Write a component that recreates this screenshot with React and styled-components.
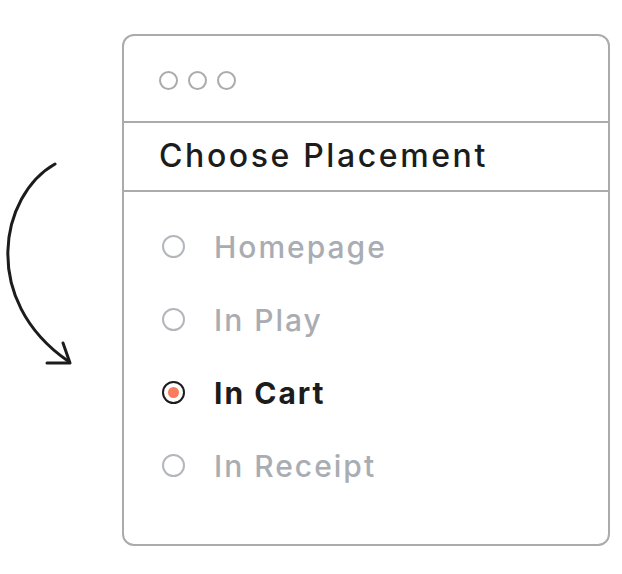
import React from "react";
import styled, { createGlobalStyle } from "styled-components";

const Global = createGlobalStyle`
  html, body { margin: 0; padding: 0; background: #ffffff; }
  body { font-family: "Inter", "Lato", sans-serif; }
`;

const Page = styled.div`
  display: flex;
  align-items: flex-start;
  width: 622px;
  height: 574px;
  background: #fff;
`;

const ArrowCol = styled.div`
  width: 122px;
  flex: none;
`;

const Card = styled.div`
  margin-top: 34px;
  width: 488px;
  height: 512px;
  box-sizing: border-box;
  border: 2px solid #ababab;
  border-radius: 12px;
  display: flex;
  flex-direction: column;
`;

const Header = styled.div`
  height: 87px;
  box-sizing: border-box;
  display: flex;
  align-items: center;
  gap: 10px;
  padding: 4px 0 0 35px;
  border-bottom: 2px solid #ababab;
`;

const Dot = styled.span`
  width: 19px;
  height: 19px;
  box-sizing: border-box;
  border: 2px solid #ababab;
  border-radius: 50%;
`;

const TitleRow = styled.div`
  height: 69px;
  box-sizing: border-box;
  display: flex;
  align-items: center;
  padding: 0 0 2px 35px;
  border-bottom: 2px solid #ababab;
`;

const Title = styled.h1`
  margin: 0;
  font-size: 32px;
  font-weight: 500;
  letter-spacing: 2.6px;
  color: #1c1c1c;
`;

const List = styled.div`
  display: flex;
  flex-direction: column;
  padding: 18px 0 0 38px;
`;

const Option = styled.div`
  height: 73px;
  display: flex;
  align-items: center;
  gap: 29px;
`;

const Radio = styled.span`
  width: 23px;
  height: 23px;
  box-sizing: border-box;
  border-radius: 50%;
  border: 2px solid ${(p) => (p.$checked ? "#1c1c1c" : "#b3b6bb")};
  display: flex;
  align-items: center;
  justify-content: center;
  flex: none;
  &::after {
    content: "";
    display: ${(p) => (p.$checked ? "block" : "none")};
    width: 11px;
    height: 11px;
    border-radius: 50%;
    background: #f77d5c;
  }
`;

const Label = styled.span`
  font-size: 30px;
  letter-spacing: 2px;
  font-weight: ${(p) => (p.$checked ? 700 : 500)};
  color: ${(p) => (p.$checked ? "#1c1c1c" : "#a9adb3")};
`;

const options = [
  { label: "Homepage" },
  { label: "In Play" },
  { label: "In Cart", checked: true },
  { label: "In Receipt" },
];

export default function App() {
  return (
    <>
      <Global />
      <Page>
        <ArrowCol>
          <svg width="122" height="380" viewBox="0 0 122 380" fill="none">
            <path
              d="M55 164 C 0 195, -20 300, 68 361"
              stroke="#1c1c1c"
              strokeWidth="3"
              strokeLinecap="round"
            />
            <path
              d="M63 343 L70 363 L47 363"
              stroke="#1c1c1c"
              strokeWidth="3"
              strokeLinecap="round"
              strokeLinejoin="round"
            />
          </svg>
        </ArrowCol>
        <Card>
          <Header>
            <Dot />
            <Dot />
            <Dot />
          </Header>
          <TitleRow>
            <Title>Choose Placement</Title>
          </TitleRow>
          <List>
            {options.map((o) => (
              <Option key={o.label}>
                <Radio $checked={o.checked} />
                <Label $checked={o.checked}>{o.label}</Label>
              </Option>
            ))}
          </List>
        </Card>
      </Page>
    </>
  );
}
